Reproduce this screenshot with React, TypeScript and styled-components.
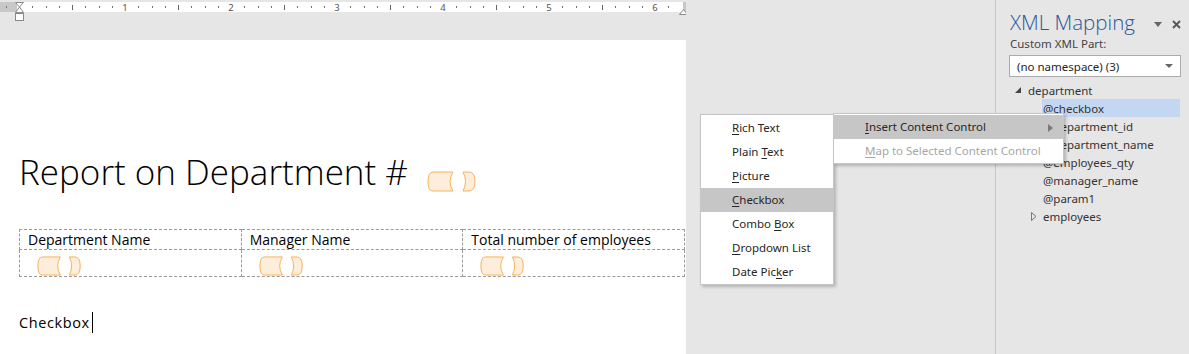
import React from "react";
import styled, { createGlobalStyle } from "styled-components";

const GlobalStyle = createGlobalStyle`
  html, body {
    margin: 0;
    padding: 0;
    background: #e6e6e6;
    overflow: hidden;
  }
  #root {
    width: 1189px;
    height: 354px;
  }
`;

const Window = styled.div`
  position: relative;
  display: flex;
  width: 1189px;
  height: 354px;
  background: #e6e6e6;
  font-family: "Noto Sans", "Open Sans", sans-serif;
  overflow: hidden;
`;

const Workspace = styled.div`
  width: 995px;
  display: flex;
  flex-direction: column;
`;

const RulerBar = styled.div`
  height: 40px;
  width: 686px;
`;

const Page = styled.div`
  width: 686px;
  flex: 1;
  background: #ffffff;
  padding-left: 19px;
  box-sizing: border-box;
  font-family: "Open Sans", "Noto Sans", sans-serif;
  color: #000;
`;

const TitleRow = styled.div`
  display: flex;
  align-items: flex-end;
  gap: 19px;
  margin-top: 108px;
`;

const Title = styled.h1`
  margin: 0;
  font-size: 35px;
  font-weight: 300;
  line-height: 48px;
`;

const PlaceholderSvg = styled.svg<{ $lift?: number }>`
  display: block;
  margin-bottom: ${(p) => p.$lift ?? 0}px;
  path {
    fill: #fdeedb;
    stroke: #f7b25a;
    stroke-width: 1;
  }
`;

const Table = styled.table`
  margin-top: 33px;
  width: 666px;
  border-collapse: collapse;
  table-layout: fixed;
  font-size: 14px;
  td {
    border: 1px dashed #9a9a9a;
    padding: 0 0 0 8px;
    vertical-align: top;
  }
`;

const HeaderCell = styled.td`
  height: 19px;
  line-height: 19px;
  white-space: nowrap;
`;

const DataCell = styled.td`
  height: 26px;
  && {
    padding-left: 17px;
    padding-top: 6px;
    box-sizing: border-box;
  }
`;

const Paragraph = styled.p`
  margin: 35px 0 0;
  font-size: 14.5px;
  letter-spacing: 0.6px;
  line-height: 21px;
  display: flex;
  align-items: center;
`;

const Caret = styled.span`
  display: inline-block;
  width: 1px;
  height: 21px;
  background: #000;
  margin-left: 2px;
`;

/* ---------- menus ---------- */

const Menu = styled.div<{ $left: number; $top: number; $width: number }>`
  position: absolute;
  left: ${(p) => p.$left}px;
  top: ${(p) => p.$top}px;
  width: ${(p) => p.$width}px;
  background: #ffffff;
  border: 1px solid #c6c6c6;
  box-shadow: 2px 2px 3px rgba(0, 0, 0, 0.22);
  padding: 1px 0 0;
  box-sizing: border-box;
  font-size: 11.5px;
`;

const MenuItem = styled.div<{ $active?: boolean; $disabled?: boolean }>`
  position: relative;
  height: 24px;
  line-height: 24px;
  padding-left: 31px;
  color: ${(p) => (p.$disabled ? "#a6a6a6" : "#262626")};
  background: ${(p) => (p.$active ? "#c6c6c6" : "transparent")};
  white-space: nowrap;
  u {
    text-decoration: underline;
    text-underline-offset: 2px;
  }
`;

const SubArrow = styled.svg`
  position: absolute;
  right: 10px;
  top: 9px;
`;

/* ---------- panel ---------- */

const Panel = styled.aside`
  width: 194px;
  border-left: 1px solid #c6c6c6;
  box-sizing: border-box;
  padding: 0 8px 0 14px;
  font-size: 11.5px;
  color: #333;
`;

const PanelHeader = styled.div`
  display: flex;
  align-items: flex-start;
  margin-top: 9px;
`;

const PanelTitle = styled.h2`
  flex: 1;
  margin: 0;
  font-family: "Open Sans", "Noto Sans", sans-serif;
  font-weight: 300;
  font-size: 20.5px;
  line-height: 27px;
  color: #2b579a;
`;

const HeaderIcon = styled.svg<{ $top: number; $gap: number }>`
  margin-top: ${(p) => p.$top}px;
  margin-left: ${(p) => p.$gap}px;
`;

const FieldLabel = styled.div`
  line-height: 16px;
  color: #444;
`;

const Select = styled.div`
  margin: 3px 0 0 -1px;
  height: 22px;
  border: 1px solid #ababab;
  background: #fff;
  box-sizing: border-box;
  display: flex;
  align-items: center;
  justify-content: space-between;
  padding: 0 7px 0 7px;
  color: #262626;
`;

const Tree = styled.div`
  margin-top: 4px;
`;

const TreeRow = styled.div<{ $indent: number }>`
  display: flex;
  height: 18px;
  line-height: 19px;
  padding-left: ${(p) => p.$indent}px;
  margin-right: 1px;
`;

const Expander = styled.span<{ $offset: number }>`
  width: 13px;
  flex-shrink: 0;
  display: flex;
  align-items: center;
  padding-left: ${(p) => p.$offset}px;
  box-sizing: border-box;
`;

const TreeLabel = styled.span<{ $selected?: boolean }>`
  flex: 1;
  padding-left: 1px;
  background: ${(p) => (p.$selected ? "#c4d7f2" : "transparent")};
  white-space: nowrap;
`;

/* ---------- drawings ---------- */

const Placeholder = ({ w, h, lift }: { w: number; h: number; lift?: number }) => (
  <PlaceholderSvg width={w} height={h} viewBox="0 0 50 21" preserveAspectRatio="none" $lift={lift}>
    <path d="M6,1 H26 Q20,10.5 26,20 H6 Q1,20 1,10.5 Q1,1 6,1 Z" vectorEffect="non-scaling-stroke" />
    <path d="M36,1 H42 Q48,1 48,10.5 Q48,20 42,20 H36 Q41,10.5 36,1 Z" vectorEffect="non-scaling-stroke" />
  </PlaceholderSvg>
);

const Ruler = () => {
  const origin = 19;
  const step = 13.25;
  const marks: React.ReactNode[] = [];
  for (let i = -1; i <= 50; i++) {
    const x = origin + i * step;
    if (i === 0 || x > 678) continue;
    if (i % 8 === 0) {
      marks.push(
        <text key={i} x={x} y={10.5} fontSize="9.5" fill="#555" textAnchor="middle" fontFamily="Noto Sans, sans-serif">
          {i / 8}
        </text>
      );
    } else if (i % 4 === 0) {
      marks.push(<rect key={i} x={Math.round(x)} y={5} width={1} height={5} fill="#666" />);
    } else {
      marks.push(<rect key={i} x={Math.round(x)} y={6} width={1} height={2} fill="#777" />);
    }
  }
  return (
    <svg width="686" height="22" viewBox="0 0 686 22" style={{ display: "block" }}>
      <rect x="0" y="2" width="686" height="10" fill="#ffffff" />
      <rect x="0" y="2" width="17" height="10" fill="#c8c8c8" />
      <rect x="683" y="2" width="3" height="10" fill="#c8c8c8" />
      {marks}
      <path d="M15.5,2.5 L23.5,2.5 L19.5,7 L23.5,12.5 L15.5,12.5 L19.5,7 Z" fill="#fff" stroke="#8a8a8a" />
      <rect x="15.5" y="13.5" width="8" height="7" fill="#fff" stroke="#8a8a8a" />
      <path d="M679.5,14.5 L683.5,9.5 L687.5,14.5 Z" fill="#fff" stroke="#8a8a8a" />
    </svg>
  );
};

const Accel = ({ text, at }: { text: string; at: number }) => (
  <>
    {text.slice(0, at)}
    <u>{text[at]}</u>
    {text.slice(at + 1)}
  </>
);

const insertItems = [
  { label: "Rich Text", at: 0 },
  { label: "Plain Text", at: 6 },
  { label: "Picture", at: 0 },
  { label: "Checkbox", at: 0, active: true },
  { label: "Combo Box", at: 6 },
  { label: "Dropdown List", at: 0 },
  { label: "Date Picker", at: 8 },
];

const attributes = ["@department_id", "@department_name", "@employees_qty", "@manager_name", "@param1"];

export default function App() {
  return (
    <>
      <GlobalStyle />
      <Window>
        <Workspace>
          <RulerBar>
            <Ruler />
          </RulerBar>
          <Page>
            <TitleRow>
              <Title>Report on Department #</Title>
              <Placeholder w={50} h={21} lift={4} />
            </TitleRow>
            <Table>
              <tbody>
                <tr>
                  <HeaderCell>Department Name</HeaderCell>
                  <HeaderCell>Manager Name</HeaderCell>
                  <HeaderCell>Total number of employees</HeaderCell>
                </tr>
                <tr>
                  <DataCell>
                    <Placeholder w={45} h={20} />
                  </DataCell>
                  <DataCell>
                    <Placeholder w={45} h={20} />
                  </DataCell>
                  <DataCell>
                    <Placeholder w={45} h={20} />
                  </DataCell>
                </tr>
              </tbody>
            </Table>
            <Paragraph>
              Checkbox
              <Caret />
            </Paragraph>
          </Page>
        </Workspace>

        <Panel>
          <PanelHeader>
            <PanelTitle>XML Mapping</PanelTitle>
            <HeaderIcon width="8" height="5" viewBox="0 0 8 5" $top={13} $gap={0}>
              <path d="M0,0 H8 L4,5 Z" fill="#666" />
            </HeaderIcon>
            <HeaderIcon width="9" height="9" viewBox="0 0 9 9" $top={11} $gap={10}>
              <path d="M1,1 L8,8 M8,1 L1,8" stroke="#555" strokeWidth="1.8" />
            </HeaderIcon>
          </PanelHeader>
          <FieldLabel>Custom XML Part:</FieldLabel>
          <Select>
            <span>(no namespace) (3)</span>
            <svg width="8" height="4" viewBox="0 0 8 4">
              <path d="M0,0 H8 L4,4 Z" fill="#666" />
            </svg>
          </Select>
          <Tree>
            <TreeRow $indent={4}>
              <Expander $offset={1}>
                <svg width="6" height="6" viewBox="0 0 6 6">
                  <path d="M6,0 V6 H0 Z" fill="#444" />
                </svg>
              </Expander>
              <TreeLabel>department</TreeLabel>
            </TreeRow>
            <TreeRow $indent={19}>
              <Expander $offset={0} />
              <TreeLabel $selected>@checkbox</TreeLabel>
            </TreeRow>
            {attributes.map((a) => (
              <TreeRow key={a} $indent={19}>
                <Expander $offset={0} />
                <TreeLabel>{a}</TreeLabel>
              </TreeRow>
            ))}
            <TreeRow $indent={19}>
              <Expander $offset={2}>
                <svg width="6" height="9" viewBox="0 0 6 9">
                  <path d="M0.5,0.5 L5,4.5 L0.5,8.5 Z" fill="none" stroke="#777" />
                </svg>
              </Expander>
              <TreeLabel>employees</TreeLabel>
            </TreeRow>
          </Tree>
        </Panel>

        <Menu $left={700} $top={114} $width={134}>
          {insertItems.map((it) => (
            <MenuItem key={it.label} $active={it.active}>
              <Accel text={it.label} at={it.at} />
            </MenuItem>
          ))}
        </Menu>

        <Menu $left={833} $top={113} $width={231}>
          <MenuItem $active>
            <Accel text="Insert Content Control" at={0} />
            <SubArrow width="5" height="8" viewBox="0 0 5 8">
              <path d="M0,0 L5,4 L0,8 Z" fill="#7a7a7a" />
            </SubArrow>
          </MenuItem>
          <MenuItem $disabled>
            <Accel text="Map to Selected Content Control" at={0} />
          </MenuItem>
        </Menu>
      </Window>
    </>
  );
}
